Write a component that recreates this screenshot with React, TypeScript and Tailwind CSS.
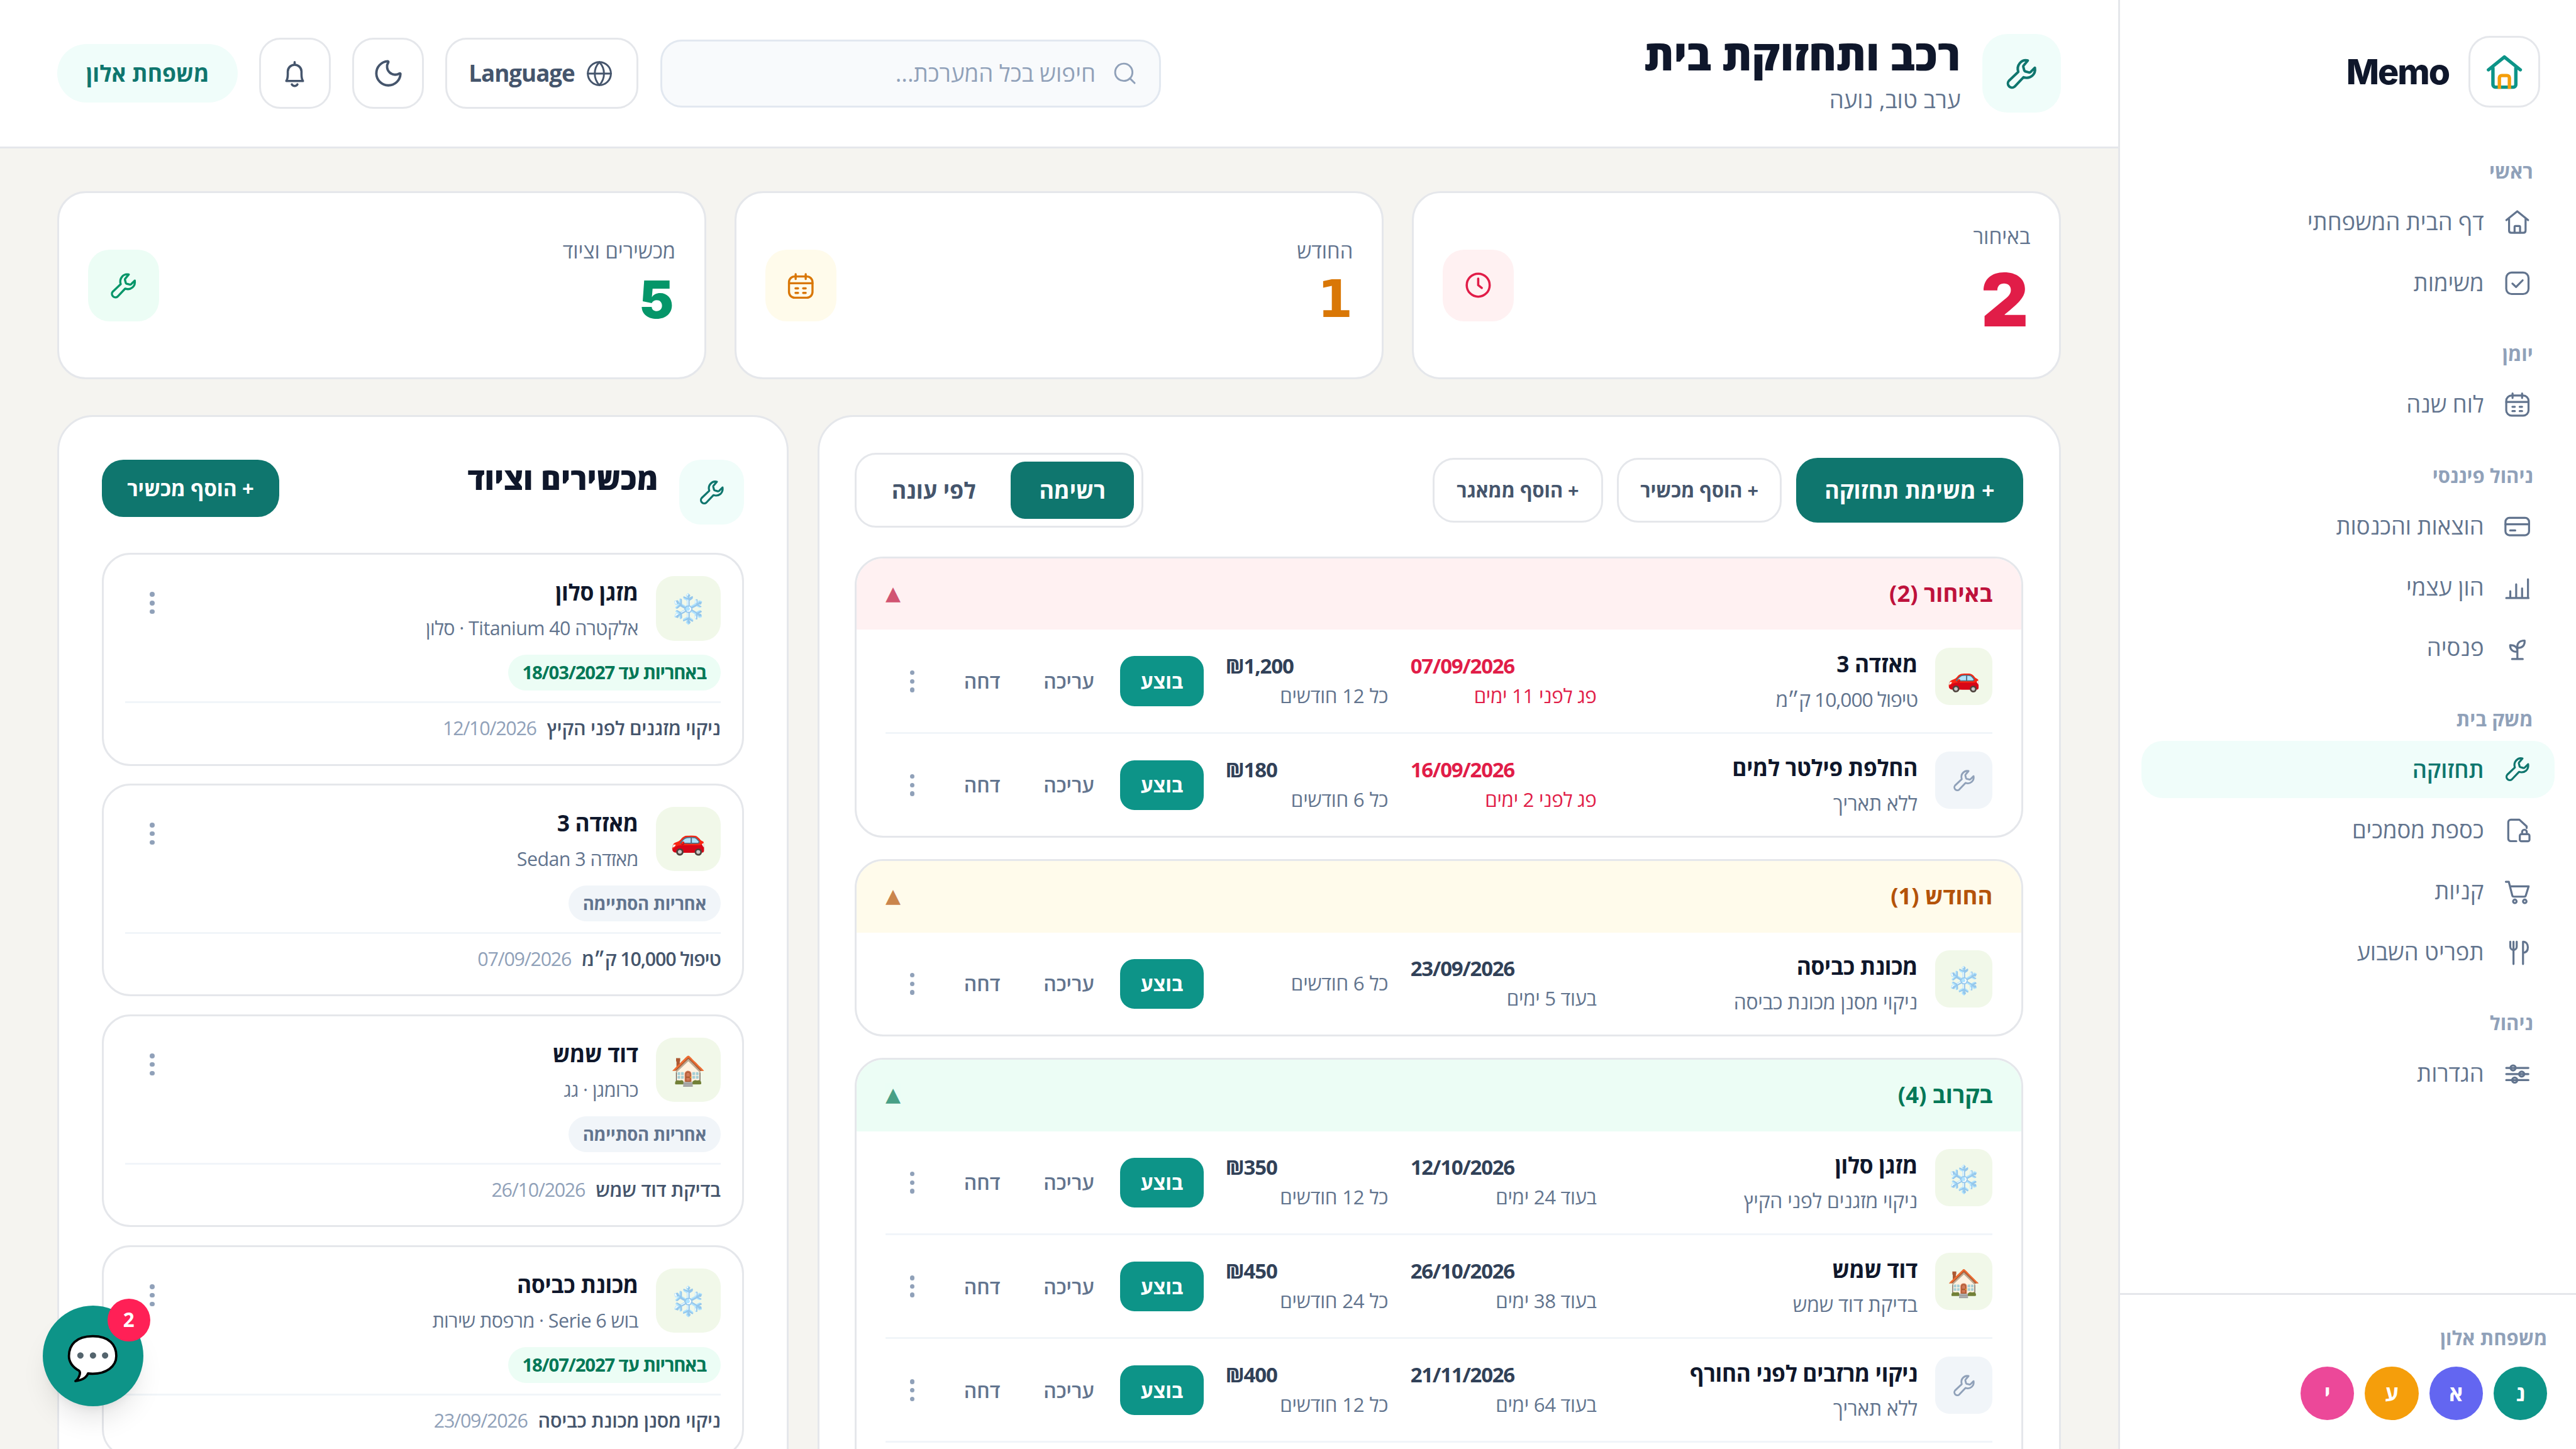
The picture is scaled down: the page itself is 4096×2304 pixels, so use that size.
import type { ReactNode } from "react";
import { Globe, Moon, Search } from "lucide-react";

interface iIconProps {
  className?: string;
  children?: ReactNode;
}

function Icon({ className = "size-[18px]", children }: iIconProps) {
  return (
    <svg
      viewBox="0 0 24 24"
      fill="none"
      stroke="currentColor"
      strokeWidth={1.5}
      strokeLinecap="round"
      strokeLinejoin="round"
      className={`shrink-0 ${className}`}
    >
      {children}
    </svg>
  );
}

function WrenchIcon({ className }: iIconProps) {
  return (
    <Icon className={className}>
      <path d="M15.9 4.2c-3.9-.8-7 2.8-5.7 6.8l-5.6 5.3a2.45 2.45 0 0 0 3.4 3.5l5.3-5.6c4.1 1.3 7.5-1.7 6.8-5.7l-2.6 2.6a1 1 0 0 1-1 .2l-2.2-.6a.8.8 0 0 1-.5-.5l-.6-2.2a1 1 0 0 1 .1-.7z" />
    </Icon>
  );
}

function CalendarIcon({ className }: iIconProps) {
  return (
    <Icon className={className}>
      <rect x="3.8" y="5.6" width="16.6" height="15" rx="4" />
      <path d="M3.8 10.4h16.6M8.5 4v3.4M15.6 4v3.4M8.4 14h1.8M13.8 14h1.8M8.4 17.2h1.8M13.8 17.2h1.8" />
    </Icon>
  );
}

const navIcons: Record<string, ReactNode> = {
  home: (
    <Icon>
      <path d="M3.9 10.8 12 4.2l8.1 6.6M5.9 9.6v8.9c0 1 .7 1.7 1.7 1.7h8.9c1 0 1.7-.7 1.7-1.7V9.6" />
      <path d="M10 20v-4.1c0-.4.3-.7.7-.7h2.7c.4 0 .7.3.7.7V20" />
    </Icon>
  ),
  tasks: (
    <Icon>
      <rect x="3.8" y="4.4" width="16.6" height="16" rx="4" />
      <path d="m8.4 12.6 2.7 2.6 4.9-5" />
    </Icon>
  ),
  calendar: <CalendarIcon />,
  card: (
    <Icon>
      <rect x="3.2" y="5.8" width="17.6" height="13" rx="3" />
      <path d="M3.2 10.6h17.6M6.7 15.2h3.8" />
    </Icon>
  ),
  chart: (
    <Icon>
      <path d="M3.8 20.6h16.6M6.8 20.4v-4.9M11.2 20.4v-10M15.6 20.4v-7M20 20.4V6.6" />
    </Icon>
  ),
  sprout: (
    <Icon>
      <path d="M12.1 20.6v-8.2M8.1 20.6h8M12.1 12.2c-.4-3.4 1.5-5.4 5.4-5.4.2 3.6-1.7 5.6-5.4 5.4zM12.1 15.2c.2-3.2-1.7-5-5.4-4.9-.1 3.2 1.8 5 5.4 4.9z" />
    </Icon>
  ),
  wrench: <WrenchIcon className="size-[18px]" />,
  vault: (
    <Icon>
      <path d="M11.3 20.4H7.2c-1.1 0-1.9-.8-1.9-1.9V6.3c0-1.1.8-1.9 1.9-1.9h6.4l5.4 5v1.2" />
      <rect x="13.9" y="15.2" width="7.2" height="5.3" rx="1.2" />
      <path d="M15.6 15v-1.4a1.75 1.75 0 0 1 3.5 0V15" />
    </Icon>
  ),
  cart: (
    <Icon>
      <path d="M3.5 5.2h2.2l2.6 10.2c.1.6.6.9 1.2.9h7.6c.6 0 1.1-.4 1.3-1l2.1-6.7H6.7" />
      <circle cx="10.2" cy="19.8" r="1.3" />
      <circle cx="17.6" cy="19.8" r="1.3" />
    </Icon>
  ),
  cutlery: (
    <Icon>
      <path d="M6.8 4.4v3.7a2.4 2.4 0 0 0 4.8 0V4.4M9.2 4.4V21M16.3 21V4.4c2.2 0 3.6 1.7 3.6 4.2s-1.3 4-3.6 4.1" />
    </Icon>
  ),
  sliders: (
    <Icon>
      <path d="M3.8 8h16.5M3.8 12.6h16.5M3.8 17.1h16.5" />
      <circle cx="8.9" cy="8" r="1.9" />
      <circle cx="15.3" cy="12.6" r="1.9" />
      <circle cx="10.1" cy="17.1" r="1.9" />
    </Icon>
  ),
};

const navSections = [
  {
    title: "ראשי",
    items: [
      { icon: "home", label: "דף הבית המשפחתי" },
      { icon: "tasks", label: "משימות" },
    ],
  },
  { title: "יומן", items: [{ icon: "calendar", label: "לוח שנה" }] },
  {
    title: "ניהול פיננסי",
    items: [
      { icon: "card", label: "הוצאות והכנסות" },
      { icon: "chart", label: "הון עצמי" },
      { icon: "sprout", label: "פנסיה" },
    ],
  },
  {
    title: "משק בית",
    items: [
      { icon: "wrench", label: "תחזוקה", active: true },
      { icon: "vault", label: "כספת מסמכים" },
      { icon: "cart", label: "קניות" },
      { icon: "cutlery", label: "תפריט השבוע" },
    ],
  },
  { title: "ניהול", items: [{ icon: "sliders", label: "הגדרות" }] },
];

const members = [
  { letter: "נ", color: "bg-[#0d9488]" },
  { letter: "א", color: "bg-[#6366f1]" },
  { letter: "ע", color: "bg-[#f59e0b]" },
  { letter: "י", color: "bg-[#ec4899]" },
];

function Sidebar() {
  return (
    <aside className="flex w-64 shrink-0 flex-col border-l-[1.06px] border-gray-200 bg-white">
      <div className="flex items-center gap-[11px] px-5 pt-5">
        <div className="flex size-10 items-center justify-center rounded-xl border-[1.06px] border-gray-200">
          <svg viewBox="0 0 24 24" fill="none" strokeWidth={1.9} strokeLinecap="round" strokeLinejoin="round" className="size-6">
            <path stroke="#0d9488" d="M3.1 10.9 12 3.7l8.9 7.2M5.6 10v9.2c0 .8.6 1.4 1.4 1.4h10c.8 0 1.4-.6 1.4-1.4V10" />
            <path stroke="#f59e0b" strokeLinecap="butt" d="M9.2 21.5v-6.1c0-.7.6-1.3 1.3-1.3h3c.7 0 1.3.6 1.3 1.3v6.1" />
          </svg>
        </div>
        <span className="font-['Inter'] text-[19.5px] font-extrabold tracking-[-0.7px] text-slate-900">Memo</span>
      </div>
      <nav className="mt-[27px] flex flex-1 flex-col gap-[15px] px-3">
        {navSections.map((section) => (
          <div key={section.title} className="pt-px">
            <p className="mb-1 px-3 text-[10.9px] leading-4 font-bold text-slate-400">{section.title}</p>
            <div className="flex flex-col gap-0.5">
              {section.items.map((item) => (
                <div
                  key={item.label}
                  className={
                    "active" in item
                      ? "flex h-8 items-center gap-[9.5px] rounded-xl bg-[#f0fdfa] px-3 text-[12.7px] font-semibold text-[#0f766e]"
                      : "flex h-8 items-center gap-[9.5px] rounded-xl px-3 text-[12.8px] font-medium text-slate-500"
                  }
                >
                  {navIcons[item.icon]}
                  <span>{item.label}</span>
                </div>
              ))}
            </div>
          </div>
        ))}
      </nav>
      <div className="border-t-[1.06px] border-gray-200 px-4 pt-4 pb-4">
        <p className="text-[10.9px] leading-4 font-bold text-slate-400">משפחת אלון</p>
        <div className="mt-2 flex gap-1.5">
          {members.map((m) => (
            <span
              key={m.letter}
              className={`flex size-[30px] items-center justify-center rounded-full text-xs font-bold text-white ${m.color}`}
            >
              {m.letter}
            </span>
          ))}
        </div>
      </div>
    </aside>
  );
}

function Header() {
  return (
    <header className="flex h-[83px] shrink-0 items-center justify-between border-b-[1.06px] border-gray-200 bg-white px-8">
      <div className="flex items-center gap-3">
        <div className="flex size-11 items-center justify-center rounded-[14px] bg-[#f0fdfa] text-[#0f766e]">
          <WrenchIcon className="size-[22.5px]" />
        </div>
        <div>
          <h1 className="text-[23.5px] leading-[30px] font-extrabold text-slate-900">רכב ותחזוקת בית</h1>
          <p className="text-[12.9px] leading-[21px] text-slate-500">ערב טוב, נועה</p>
        </div>
      </div>
      <div className="flex items-center gap-3 text-slate-600">
        <div className="flex h-[38px] w-[280px] items-center gap-[9px] rounded-xl border-[1.06px] border-slate-200 bg-slate-50 px-3 text-slate-400">
          <Search className="size-[14.5px]" strokeWidth={1.7} />
          <span className="text-[12.9px]">חיפוש בכל המערכת...</span>
        </div>
        <div className="flex h-10 w-[108px] items-center justify-between rounded-xl border-[1.06px] border-gray-200 pr-[13px] pl-3 text-[12.9px] font-bold">
          <Globe className="size-[15.5px]" strokeWidth={1.6} />
          <span className="tracking-[-0.35px]">Language</span>
        </div>
        <div className="flex size-10 items-center justify-center rounded-xl border-[1.06px] border-gray-200">
          <Moon className="size-[18px]" strokeWidth={1.8} />
        </div>
        <div className="flex size-10 items-center justify-center rounded-xl border-[1.06px] border-gray-200">
          <Icon className="size-5">
            <path d="M11.6 4.6v1.6M6 17.2c.8-1 1-2.6 1-4.6v-1.7a4.6 4.6 0 0 1 9.2 0v1.7c0 2 .2 3.6 1 4.6zM9.7 19.5a2.2 2.2 0 0 0 3.8 0" />
          </Icon>
        </div>
        <div className="flex h-[33px] w-[101px] items-center justify-center rounded-full bg-[#f0fdfa] text-[12.5px] font-bold text-[#0f766e]">
          משפחת אלון
        </div>
      </div>
    </header>
  );
}

function Stats() {
  return (
    <div className="grid grid-cols-3 gap-4">
      <div className="flex h-[105px] items-center justify-between rounded-2xl border-[1.06px] border-gray-200 bg-white px-4">
        <div>
          <p className="text-[11.7px] leading-4 font-medium text-slate-500">באיחור</p>
          <p className="pr-px font-['Inter'] text-[41px] leading-[54.5px] font-black text-[#e11d48]">2</p>
        </div>
        <div className="flex size-10 items-center justify-center rounded-xl bg-[#fff1f2] text-[#e11d48]">
          <Icon className="size-5">
            <circle cx="12" cy="12" r="7.7" />
            <path d="M12 7.6V12l2.4 1.9" />
          </Icon>
        </div>
      </div>
      <div className="flex h-[105px] items-center justify-between rounded-2xl border-[1.06px] border-gray-200 bg-white px-4">
        <div>
          <p className="text-[11.5px] leading-4 font-medium text-slate-500">החודש</p>
          <p className="font-['DejaVu_Sans'] text-[28.5px] leading-[38.6px] font-bold text-[#d97706]">1</p>
        </div>
        <div className="flex size-10 items-center justify-center rounded-xl bg-[#fffbeb] text-[#d97706]">
          <CalendarIcon className="size-[19px]" />
        </div>
      </div>
      <div className="flex h-[105px] items-center justify-between rounded-2xl border-[1.06px] border-gray-200 bg-white px-4">
        <div>
          <p className="text-[11.5px] leading-4 font-medium text-slate-500">מכשירים וציוד</p>
          <p className="pr-px font-['Inter'] text-[29px] leading-[38.6px] font-black text-[#059669]">5</p>
        </div>
        <div className="flex size-10 items-center justify-center rounded-xl bg-[#ecfdf5] text-[#059669]">
          <WrenchIcon className="size-[19px]" />
        </div>
      </div>
    </div>
  );
}

function Dots() {
  return (
    <span className="flex h-[30px] w-[30px] shrink-0 flex-col items-center justify-center gap-[2.2px] text-slate-400">
      <i className="size-[2.6px] rounded-full bg-current" />
      <i className="size-[2.6px] rounded-full bg-current" />
      <i className="size-[2.6px] rounded-full bg-current" />
    </span>
  );
}

interface iTask {
  emoji?: string;
  name: string;
  note: string;
  date: string;
  due: string;
  late?: boolean;
  price?: string;
  every: string;
}

const groups: { title: string; head: string; clipped?: boolean; tasks: iTask[] }[] = [
  {
    title: "באיחור (2)",
    head: "bg-[#fff1f2] text-[#be123c]",
    tasks: [
      { emoji: "🚗", name: "מאזדה 3", note: "טיפול 10,000 ק״מ", date: "07/09/2026", due: "פג לפני 11 ימים", late: true, price: "₪1,200", every: "כל 12 חודשים" },
      { name: "החלפת פילטר למים", note: "ללא תאריך", date: "16/09/2026", due: "פג לפני 2 ימים", late: true, price: "₪180", every: "כל 6 חודשים" },
    ],
  },
  {
    title: "החודש (1)",
    head: "bg-[#fffbeb] text-[#b45309]",
    tasks: [
      { emoji: "❄️", name: "מכונת כביסה", note: "ניקוי מסנן מכונת כביסה", date: "23/09/2026", due: "בעוד 5 ימים", every: "כל 6 חודשים" },
    ],
  },
  {
    title: "בקרוב (4)",
    head: "bg-[#ecfdf5] text-[#047857]",
    clipped: true,
    tasks: [
      { emoji: "❄️", name: "מזגן סלון", note: "ניקוי מזגנים לפני הקיץ", date: "12/10/2026", due: "בעוד 24 ימים", price: "₪350", every: "כל 12 חודשים" },
      { emoji: "🏠", name: "דוד שמש", note: "בדיקת דוד שמש", date: "26/10/2026", due: "בעוד 38 ימים", price: "₪450", every: "כל 24 חודשים" },
      { name: "ניקוי מרזבים לפני החורף", note: "ללא תאריך", date: "21/11/2026", due: "בעוד 64 ימים", price: "₪400", every: "כל 12 חודשים" },
    ],
  },
];

const noteTracking = (text: string) => (/\d/.test(text) ? "tracking-[-0.4px]" : "tracking-[-0.08px]");

function TaskRow({ task }: { task: iTask }) {
  return (
    <div className="flex gap-2.5 py-2.5">
      {task.emoji ? (
        <span className="flex size-8 shrink-0 items-center justify-center rounded-lg bg-[#f1f8e9] text-[15px]">{task.emoji}</span>
      ) : (
        <span className="flex size-8 shrink-0 items-center justify-center rounded-lg bg-slate-100 text-slate-400">
          <WrenchIcon className="size-4" />
        </span>
      )}
      <div className="h-[37px] flex-1 pt-[1.2px]">
        <p className="text-[12.4px] leading-4 font-bold tracking-[-0.12px] text-slate-900">{task.name}</p>
        <p className={`mt-0.5 text-[11.2px] leading-[19px] text-slate-500 ${noteTracking(task.note)}`}>{task.note}</p>
      </div>
      <div className="ml-[2.5px] flex w-[104px] flex-col justify-center gap-px">
        <p
          dir="ltr"
          className={`text-[11.6px] leading-4 font-bold tracking-[-0.46px] ${task.late ? "text-[#e11d48]" : "text-slate-700"}`}
        >
          {task.date}
        </p>
        <p className={`text-[11px] leading-4 tracking-[-0.12px] ${task.late ? "text-[#e11d48]" : "text-slate-500"}`}>{task.due}</p>
      </div>
      <div className="ml-[2px] flex w-[91px] flex-col justify-center gap-px">
        {task.price && (
          <p dir="ltr" className="text-[11.6px] leading-4 font-bold tracking-[-0.4px] text-slate-700">
            {task.price}
          </p>
        )}
        <p className="text-[11px] leading-4 tracking-[-0.08px] text-slate-500">{task.every}</p>
      </div>
      <div className="flex items-center gap-1 pt-[0.5px] text-[11.2px] font-semibold text-slate-500">
        <span className="flex h-7 w-[47px] items-center justify-center rounded-lg bg-[#0d9488] font-bold text-white">בוצע</span>
        <span className="w-[49px] text-center">עריכה</span>
        <span className="w-10 text-center">דחה</span>
        <Dots />
      </div>
    </div>
  );
}

function TasksPanel() {
  return (
    <section className="rounded-t-[20px] border-[1.06px] border-gray-200 bg-white p-5">
      <div className="mb-4 flex h-[42px] items-center justify-between">
        <div className="flex items-center gap-2 text-[10.8px] font-bold text-slate-600">
          <span className="flex h-9 w-[127px] items-center justify-center rounded-xl bg-[#0f766e] text-[12.6px] text-white">
            + משימת תחזוקה
          </span>
          <span className="flex h-9 w-[92px] items-center justify-center rounded-xl border-[1.06px] border-gray-200">+ הוסף מכשיר</span>
          <span className="flex h-9 w-[95px] items-center justify-center rounded-xl border-[1.06px] border-gray-200">+ הוסף ממאגר</span>
        </div>
        <div className="flex h-[42px] items-center gap-1 rounded-xl border-[1.06px] border-gray-200 p-1 text-[12.6px] font-bold text-slate-600">
          <span className="flex h-8 w-[69px] items-center justify-center rounded-lg bg-[#0f766e] text-white">רשימה</span>
          <span className="flex h-8 w-[78px] items-center justify-center">לפי עונה</span>
        </div>
      </div>
      <div className="flex flex-col gap-3">
        {groups.map((group) => (
          <div key={group.title} className="overflow-hidden rounded-2xl border-[1.06px] border-gray-200">
            <div className={`flex h-10 items-center justify-between px-4 pb-px ${group.head}`}>
              <h3 className="text-[12.8px] font-bold">{group.title}</h3>
              <span className="font-['DejaVu_Sans'] text-[11px] opacity-70">▲</span>
            </div>
            <div className="mx-4 divide-y-[1.06px] divide-slate-100">
              {group.tasks.map((task) => (
                <TaskRow key={task.name} task={task} />
              ))}
              {group.clipped && <div className="h-[57px]" />}
            </div>
          </div>
        ))}
      </div>
    </section>
  );
}

const devices = [
  { emoji: "❄️", name: "מזגן סלון", model: "אלקטרה Titanium 40 · סלון", warranty: "באחריות עד 18/03/2027", task: "ניקוי מזגנים לפני הקיץ", date: "12/10/2026" },
  { emoji: "🚗", name: "מאזדה 3", model: "מאזדה Sedan 3", task: "טיפול 10,000 ק״מ", date: "07/09/2026" },
  { emoji: "🏠", name: "דוד שמש", model: "כרומגן · גג", task: "בדיקת דוד שמש", date: "26/10/2026" },
  { emoji: "❄️", name: "מכונת כביסה", model: "בוש Serie 6 · מרפסת שירות", warranty: "באחריות עד 18/07/2027", task: "ניקוי מסנן מכונת כביסה", date: "23/09/2026" },
];

function DevicesPanel() {
  return (
    <section className="rounded-t-[20px] border-[1.06px] border-gray-200 bg-white p-6">
      <div className="mb-4 flex items-start gap-3">
        <div className="flex size-9 items-center justify-center rounded-xl bg-[#f0fdfa] text-[#0f766e]">
          <WrenchIcon className="size-[18px]" />
        </div>
        <h2 className="flex-1 text-[17px] leading-[21px] font-extrabold text-slate-900">מכשירים וציוד</h2>
        <span className="flex h-8 w-[99px] items-center justify-center rounded-xl bg-[#0f766e] text-[11.6px] font-bold text-white">
          + הוסף מכשיר
        </span>
      </div>
      <div className="flex flex-col gap-2.5">
        {devices.map((device) => (
          <div key={device.name} className="h-[119px] rounded-2xl border-[1.06px] border-gray-200 p-3">
            <div className="flex h-9 gap-2.5">
              <span className="flex size-9 shrink-0 items-center justify-center rounded-[10px] bg-[#f1f8e9] pb-px text-base">
                {device.emoji}
              </span>
              <div className="flex-1 pt-px">
                <p className="text-[12.4px] leading-4 font-bold tracking-[-0.1px] text-slate-900">{device.name}</p>
                <p className="mt-0.5 text-[10.7px] leading-[20px] tracking-[-0.2px] text-slate-500">{device.model}</p>
              </div>
              <Dots />
            </div>
            <div className="mt-2 flex">
              {device.warranty ? (
                <span className="flex h-5 items-center rounded-full bg-[#ecfdf5] px-2 text-[10.3px] font-bold tracking-[-0.4px] whitespace-nowrap text-[#047857]">
                  {device.warranty}
                </span>
              ) : (
                <span className="flex h-5 items-center rounded-full bg-slate-100 px-2 text-[9.7px] font-bold tracking-[-0.12px] whitespace-nowrap text-slate-500">
                  אחריות הסתיימה
                </span>
              )}
            </div>
            <div className="mt-[6px] flex gap-1.5 border-t-[1.06px] border-slate-100 pt-[5px] text-[10.7px] leading-[18px]">
              <span className={`font-semibold text-slate-600 ${noteTracking(device.task)}`}>{device.task}</span>
              <span dir="ltr" className="tracking-[-0.45px] text-slate-400">
                {device.date}
              </span>
            </div>
          </div>
        ))}
      </div>
    </section>
  );
}

export default function App() {
  return (
    <div
      dir="rtl"
      className="relative flex h-[810px] w-[1440px] overflow-hidden bg-[#f5f4f0] font-['Open_Sans','Noto_Color_Emoji',sans-serif] [zoom:2.84444]"
    >
      <Sidebar />
      <main className="flex min-w-0 flex-1 flex-col">
        <Header />
        <div className="flex-1 overflow-hidden px-8 pt-6">
          <Stats />
          <div className="mt-5 grid grid-cols-[1.7fr_1fr] gap-4">
            <TasksPanel />
            <DevicesPanel />
          </div>
        </div>
      </main>
      <div className="absolute bottom-6 left-6 flex size-14 items-center justify-center rounded-full bg-[#0d9488] text-2xl shadow-lg">
        💬
        <span className="absolute -top-1 -right-1 flex size-6 items-center justify-center rounded-full bg-[#ff2056] text-[11px] font-bold text-white">
          2
        </span>
      </div>
    </div>
  );
}
